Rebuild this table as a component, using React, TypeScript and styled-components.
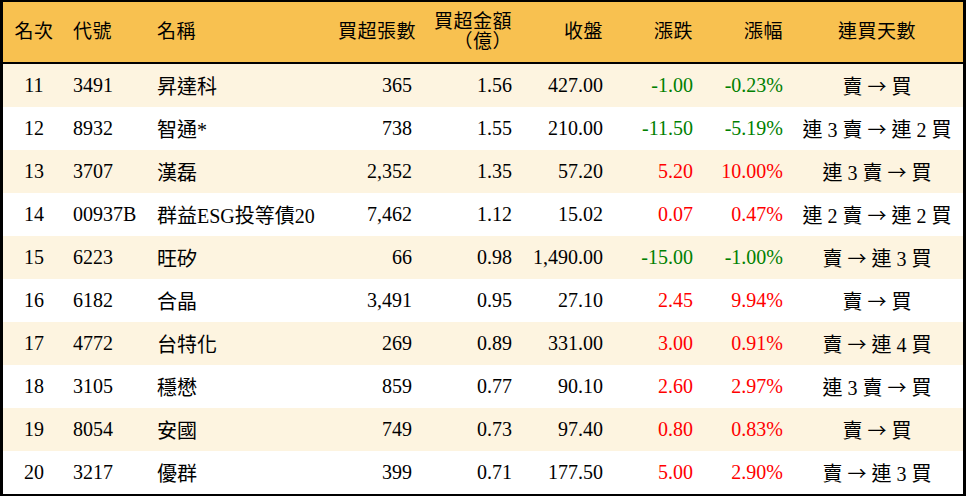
import styled, { createGlobalStyle } from "styled-components";

const GlobalStyle = createGlobalStyle`
  html, body {
    margin: 0;
    padding: 0;
    background: #ffffff;
  }
  body {
    font-family: "Liberation Serif", "Noto Sans CJK TC", serif;
  }
`;

const Table = styled.table`
  width: 966px;
  border-collapse: separate;
  border-spacing: 0;
  table-layout: fixed;
  border-style: solid;
  border-color: #000;
  border-width: 2px 3px 2px 3px;
  font-size: 20px;
  color: #000;
`;

const HeadRow = styled.tr`
  background: #f8c150;
`;

const Th = styled.th<{ $align?: string }>`
  height: 60px;
  padding: 0 8px;
  font-weight: normal;
  font-size: 19px;
  line-height: 20px;
  letter-spacing: 0.5px;
  text-align: ${(p) => p.$align || "left"};
  border-bottom: 2px solid #000;
  white-space: nowrap;
`;

const Row = styled.tr<{ $shade: boolean }>`
  background: ${(p) => (p.$shade ? "#fdf4e0" : "#ffffff")};
`;

const Td = styled.td<{ $align?: string; $tone?: string }>`
  height: 43px;
  padding: 0 8px;
  text-align: ${(p) => p.$align || "left"};
  color: ${(p) => p.$tone || "#000"};
  white-space: nowrap;
  overflow: hidden;
`;

const Arrow = styled.span`
  font-family: "Noto Sans CJK TC", sans-serif;
  font-size: 19px;
`;

interface StockRow {
  rank: number;
  code: string;
  name: string;
  lots: string;
  amount: string;
  close: string;
  change: string;
  pct: string;
  from: string;
  to: string;
}

const rows: StockRow[] = [
  { rank: 11, code: "3491", name: "昇達科", lots: "365", amount: "1.56", close: "427.00", change: "-1.00", pct: "-0.23%", from: "賣", to: "買" },
  { rank: 12, code: "8932", name: "智通*", lots: "738", amount: "1.55", close: "210.00", change: "-11.50", pct: "-5.19%", from: "連 3 賣", to: "連 2 買" },
  { rank: 13, code: "3707", name: "漢磊", lots: "2,352", amount: "1.35", close: "57.20", change: "5.20", pct: "10.00%", from: "連 3 賣", to: "買" },
  { rank: 14, code: "00937B", name: "群益ESG投等債20", lots: "7,462", amount: "1.12", close: "15.02", change: "0.07", pct: "0.47%", from: "連 2 賣", to: "連 2 買" },
  { rank: 15, code: "6223", name: "旺矽", lots: "66", amount: "0.98", close: "1,490.00", change: "-15.00", pct: "-1.00%", from: "賣", to: "連 3 買" },
  { rank: 16, code: "6182", name: "合晶", lots: "3,491", amount: "0.95", close: "27.10", change: "2.45", pct: "9.94%", from: "賣", to: "買" },
  { rank: 17, code: "4772", name: "台特化", lots: "269", amount: "0.89", close: "331.00", change: "3.00", pct: "0.91%", from: "賣", to: "連 4 買" },
  { rank: 18, code: "3105", name: "穩懋", lots: "859", amount: "0.77", close: "90.10", change: "2.60", pct: "2.97%", from: "連 3 賣", to: "買" },
  { rank: 19, code: "8054", name: "安國", lots: "749", amount: "0.73", close: "97.40", change: "0.80", pct: "0.83%", from: "賣", to: "買" },
  { rank: 20, code: "3217", name: "優群", lots: "399", amount: "0.71", close: "177.50", change: "5.00", pct: "2.90%", from: "賣", to: "連 3 買" },
];

const toneOf = (v: string) => (v.startsWith("-") ? "#008000" : "#ff0000");

export default function App() {
  return (
    <>
      <GlobalStyle />
      <Table>
        <colgroup>
          <col style={{ width: 62 }} />
          <col style={{ width: 84 }} />
          <col style={{ width: 181 }} />
          <col style={{ width: 90 }} />
          <col style={{ width: 100 }} />
          <col style={{ width: 91 }} />
          <col style={{ width: 90 }} />
          <col style={{ width: 90 }} />
          <col style={{ width: 172 }} />
        </colgroup>
        <thead>
          <HeadRow>
            <Th $align="center">名次</Th>
            <Th>代號</Th>
            <Th>名稱</Th>
            <Th $align="right">買超張數</Th>
            <Th $align="right">
              買超金額
              <br />
              （億）
            </Th>
            <Th $align="right">收盤</Th>
            <Th $align="right">漲跌</Th>
            <Th $align="right">漲幅</Th>
            <Th $align="center">連買天數</Th>
          </HeadRow>
        </thead>
        <tbody>
          {rows.map((r, i) => (
            <Row key={r.code} $shade={i % 2 === 0}>
              <Td $align="center">{r.rank}</Td>
              <Td>{r.code}</Td>
              <Td>{r.name}</Td>
              <Td $align="right">{r.lots}</Td>
              <Td $align="right">{r.amount}</Td>
              <Td $align="right">{r.close}</Td>
              <Td $align="right" $tone={toneOf(r.change)}>{r.change}</Td>
              <Td $align="right" $tone={toneOf(r.pct)}>{r.pct}</Td>
              <Td $align="center">
                {r.from} <Arrow>→</Arrow> {r.to}
              </Td>
            </Row>
          ))}
        </tbody>
      </Table>
    </>
  );
}
